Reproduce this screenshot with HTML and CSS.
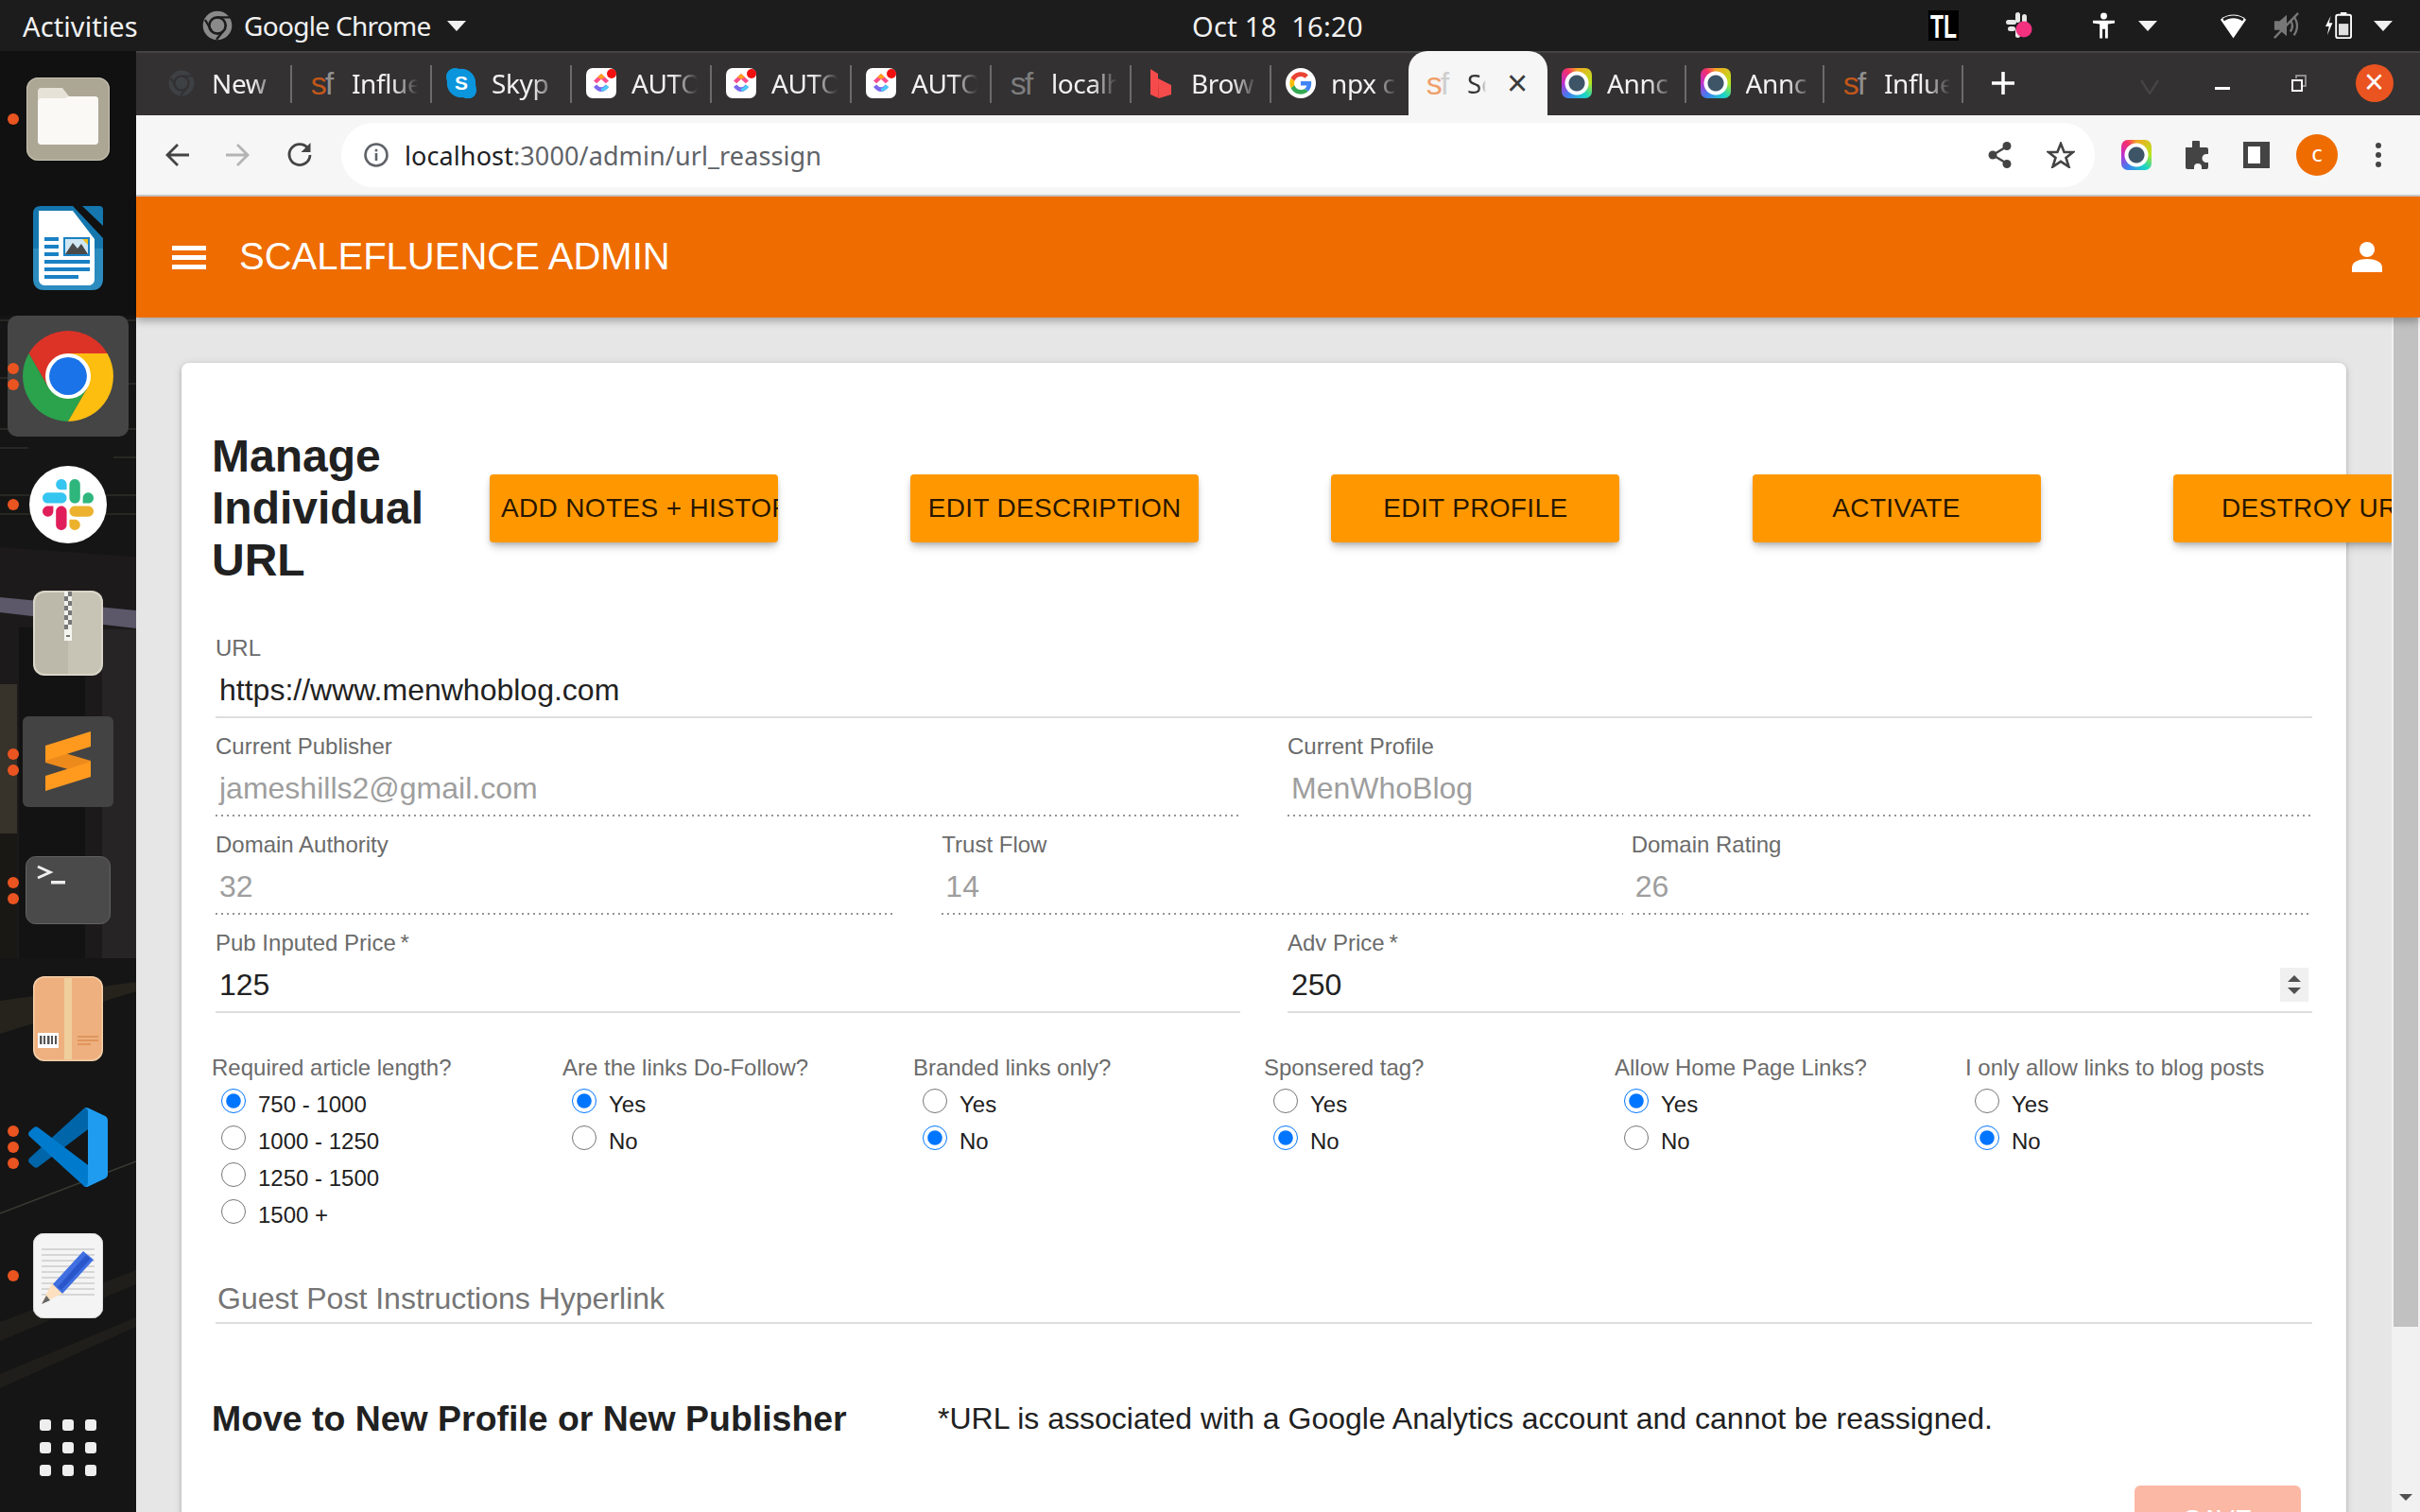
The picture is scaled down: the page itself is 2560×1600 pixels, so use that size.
FILE: index.html
```html
<!DOCTYPE html>
<html lang="en">
<head>
<meta charset="utf-8">
<title>Scalefluence Admin</title>
<link rel="stylesheet" href="styles.css">
</head>
<body>
<svg class="defs" width="0" height="0" aria-hidden="true">
  <defs>
    <symbol id="slack" viewBox="0 0 122.8 122.8">
      <path fill="#E01E5A" d="M25.8 77.6c0 7.1-5.8 12.9-12.9 12.9S0 84.7 0 77.6s5.8-12.9 12.9-12.9h12.9v12.9z"/>
      <path fill="#E01E5A" d="M32.3 77.6c0-7.1 5.8-12.9 12.9-12.9s12.9 5.8 12.9 12.9v32.3c0 7.1-5.8 12.9-12.9 12.9s-12.9-5.8-12.9-12.9V77.6z"/>
      <path fill="#36C5F0" d="M45.2 25.8c-7.1 0-12.9-5.8-12.9-12.9S38.1 0 45.2 0s12.9 5.8 12.9 12.9v12.9H45.2z"/>
      <path fill="#36C5F0" d="M45.2 32.3c7.1 0 12.9 5.8 12.9 12.9s-5.8 12.9-12.9 12.9H12.9C5.8 58.1 0 52.3 0 45.2s5.8-12.9 12.9-12.9h32.3z"/>
      <path fill="#2EB67D" d="M97 45.2c0-7.1 5.8-12.9 12.9-12.9s12.9 5.8 12.9 12.9-5.8 12.9-12.9 12.9H97V45.2z"/>
      <path fill="#2EB67D" d="M90.5 45.2c0 7.1-5.8 12.9-12.9 12.9s-12.9-5.8-12.9-12.9V12.9C64.7 5.8 70.5 0 77.6 0s12.9 5.8 12.9 12.9v32.3z"/>
      <path fill="#ECB22E" d="M77.6 97c7.1 0 12.9 5.8 12.9 12.9s-5.8 12.9-12.9 12.9-12.9-5.8-12.9-12.9V97h12.9z"/>
      <path fill="#ECB22E" d="M77.6 90.5c-7.1 0-12.9-5.8-12.9-12.9s5.8-12.9 12.9-12.9h32.3c7.1 0 12.9 5.8 12.9 12.9s-5.8 12.9-12.9 12.9H77.6z"/>
    </symbol>
    <symbol id="clickup" viewBox="0 0 32 32">
      <rect width="32" height="32" rx="7" fill="#fff"/>
      <path d="M16 6 L24 13.5 L20.8 16.2 L16 11.8 L11.2 16.2 L8 13.5Z" fill="#fa4d8c"/>
      <path d="M16 6 L20 9.8 L16 11.8 L12 9.8Z" fill="#ffa11a"/>
      <path d="M8 20 L11.2 17.4 Q16 23 20.8 17.4 L24 20 Q16 30 8 20Z" fill="#7b68ee"/>
      <path d="M20.8 17.4 L24 20 Q20.5 24.5 16 24.6 V21.4 Q18.8 21.3 20.8 17.4Z" fill="#49ccf9"/>
      <circle cx="27" cy="6" r="5" fill="#f10f0f"/>
    </symbol>
    <symbol id="chromelogo" viewBox="4 4 40 40">
      <path fill="#dd3327" d="M41.3 14A20 20 0 0 0 6.7 14L15.34 29 24 14Z"/>
      <path fill="#2ba24c" d="M6.7 14A20 20 0 0 0 24 44L32.66 29H15.34Z"/>
      <path fill="#fdbe10" d="M24 44A20 20 0 0 0 41.3 14H24L32.66 29Z"/>
      <circle cx="24" cy="24" r="10" fill="#fff"/>
      <circle cx="24" cy="24" r="8.300" fill="#1a73e8"/>
    </symbol>
    <symbol id="chromegrey" viewBox="0 0 48 48">
      <circle cx="24" cy="24" r="23" fill="currentColor"/>
      <circle cx="24" cy="24" r="13" fill="none" stroke="var(--chrome-cut)" stroke-width="4"/>
      <path d="M24 11H45M15 33 4.5 15M33 33 22.5 46" stroke="var(--chrome-cut)" stroke-width="3.5" fill="none"/>
    </symbol>
  </defs>
</svg>

<header class="topbar">
  <span class="tb-activities">Activities</span>
  <svg class="tb-chrome" viewBox="0 0 48 48"><use href="#chromegrey"/></svg>
  <span class="tb-app">Google Chrome</span>
  <span class="caret tb-caret"></span>
  <time class="tb-clock">Oct 18&nbsp; 16:20</time>
  <svg class="tb-tl" viewBox="0 0 32 32"><rect width="32" height="32" fill="#000"/><text x="2" y="29" textLength="28" lengthAdjust="spacingAndGlyphs" font-family="Liberation Sans" font-weight="700" font-size="35" fill="#fff">TL</text></svg>
  <svg class="tb-slack" viewBox="0 0 28 28">
    <g fill="#e8e8e8"><rect x="10" y="0" width="5" height="11" rx="2.5"/><rect x="0" y="8" width="11" height="5" rx="2.5"/><rect x="17" y="2" width="5" height="9" rx="2.5"/><rect x="2" y="15" width="8" height="5" rx="2.5"/><rect x="10" y="17" width="5" height="10" rx="2.5"/></g>
    <circle cx="19" cy="18" r="8.5" fill="#f2317f"/>
  </svg>
  <svg class="tb-access" viewBox="0 0 26 28"><circle cx="13" cy="3.6" r="3.6" fill="#fff"/><path d="M1 8.5H25V11.5L17.5 12.5V18H8.5V12.500L1 11.500ZM8.500 18H11.500V28H8.500ZM14.500 18H17.500V28H14.500Z" fill="#fff"/></svg>
  <span class="caret tb-caret2"></span>
  <svg class="tb-wifi" viewBox="0 0 32 28"><path d="M16 28 2 7.500C10 .5 22 .5 30 7.500Z" fill="#fff"/><path d="M4.500 6.500C11 2 21 2 27.500 6.500L26 9C20 5 12 5 6 9Z" fill="#1c1c1c"/></svg>
  <svg class="tb-vol" viewBox="0 0 30 30" fill="none"><path d="M1 10H7L15 3V27L7 20H1Z" fill="#777"/><path d="M19 9C22 13 22 18 19 22M23 5C28 11 28 20 23 26" stroke="#777" stroke-width="2.500"/><path d="M1 29 28 1" stroke="#777" stroke-width="2.500"/></svg>
  <svg class="tb-batt" viewBox="0 0 30 30"><path d="M6 4 0 16H4L2 26 8 12H4Z" fill="#fff"/><rect x="12" y="3" width="17" height="26" rx="2" fill="none" stroke="#fff" stroke-width="2"/><rect x="17" y="0" width="7" height="3" fill="#fff"/><rect x="15" y="13" width="11" height="13" fill="#e0e0e0"/></svg>
  <span class="caret tb-caret3"></span>
</header>

<div class="desktop">
  <nav class="dock">
    <svg class="wallpaper" viewBox="0 0 144 1546" preserveAspectRatio="none" aria-hidden="true">
      <rect width="144" height="1546" fill="#151515"/>
      <rect y="0" width="144" height="280" fill="#111"/>
      <g stroke="#30302b" stroke-width="2" opacity=".7">
        <path d="M0 285H144M0 346H50M100 352H144M0 400H144M0 420H30M120 430H144M0 470H144M0 490H144"/>
      </g>
      <path d="M0 525 144 535V960L0 960Z" fill="#1c1a1a"/>
      <path d="M0 578 144 592V611L0 594Z" fill="#5c586a"/>
      <rect x="108" y="612" width="36" height="348" fill="#262424"/>
      <rect x="20" y="610" width="70" height="350" fill="#131313"/>
      <path d="M0 670H18V828H0Z" fill="#37322a"/>
      <path d="M0 828H18V980H0Z" fill="#1a1815"/>
      <path d="M0 960H144V980L0 1000Z" fill="#151515"/>
      <path d="M0 1005 144 985V995L0 1040Z" fill="#25231c"/>
      <path d="M0 1230 144 1175" stroke="#3a3a34" stroke-width="1.500"/>
      <path d="M0 1345 144 1290V1305L0 1365ZM0 1400 144 1340V1350L0 1415Z" fill="#1f1e1a"/>
    </svg>
    <div class="dock-item">
      <span class="dots"><i></i></span>
      <svg class="ic-files" viewBox="0 0 88 88"><rect width="88" height="88" rx="12" fill="#aca695"/><rect x=".5" y=".5" width="87" height="87" rx="12" fill="none" stroke="#c9c4b5"/><path d="M12 15a4 4 0 0 1 4-4H38l7 9H72a4 4 0 0 1 4 4V67a4 4 0 0 1-4 4H16a4 4 0 0 1-4-4Z" fill="#e6e2d8"/><path d="M12 26a4 4 0 0 1 4-4H40l5-2H72a4 4 0 0 1 4 4V67a4 4 0 0 1-4 4H16a4 4 0 0 1-4-4Z" fill="#faf9f6"/></svg>
    </div>
    <div class="dock-item">
      <svg class="ic-writer" viewBox="0 0 74 89">
        <path d="M8 0H42L74 34V76Q74 89 62 89H12Q0 89 0 76V8Q0 0 8 0Z" fill="#1577ae"/>
        <path d="M52 0H70Q74 0 74 4V21Z" fill="#1577ae"/>
        <path d="M6 5H42L65 35V76Q65 84 58 84H13Q6 84 6 76Z" fill="#fff"/>
        <path d="M0 45H74V76Q74 89 62 89H12Q0 89 0 76Z" fill="#4aa7d8" opacity=".45"/>
        <path d="M6 45H65V76Q65 84 58 84H13Q6 84 6 76Z" fill="#fff"/>
        <g fill="#1a81c4"><rect x="12" y="33" width="15" height="4"/><rect x="12" y="41" width="15" height="4"/><rect x="12" y="49" width="15" height="4"/><rect x="12" y="57" width="48" height="4"/><rect x="12" y="65" width="48" height="4"/><rect x="12" y="73" width="36" height="4"/></g>
        <rect x="32" y="33" width="28" height="20" fill="#1a81c4"/><rect x="34" y="35" width="24" height="16" fill="#cfe6f3"/><path d="M34 51 42 39 47 45 51 40 58 51Z" fill="#4a4a4a"/><path d="M52 35H58V41Z" fill="#f3c019"/>
      </svg>
    </div>
    <div class="dock-item dock-active">
      <span class="dots"><i></i><i></i></span>
      <svg class="ic-chrome" viewBox="0 0 48 48"><use href="#chromelogo" width="48" height="48"/></svg>
    </div>
    <div class="dock-item">
      <span class="dots"><i></i></span>
      <span class="ic-slackwrap"><svg class="ic-slack" viewBox="0 0 122.800 122.800"><use href="#slack"/></svg></span>
    </div>
    <div class="dock-item">
      <svg class="ic-zip" viewBox="0 0 74 90"><rect width="74" height="90" rx="12" fill="#d9d5c8"/><path d="M37 2H60Q72 2 72 14V76Q72 88 60 88H37Z" fill="#c8c4b5"/><path d="M2 14Q2 2 14 2H37V88H14Q2 88 2 76Z" fill="#bdb9aa"/><g fill="#f1f1ec"><rect x="33" y="1" width="4" height="5"/><rect x="37" y="6" width="4" height="5"/><rect x="33" y="11" width="4" height="5"/><rect x="37" y="16" width="4" height="5"/><rect x="33" y="21" width="4" height="5"/><rect x="37" y="26" width="4" height="5"/><rect x="33" y="31" width="4" height="5"/><rect x="37" y="36" width="4" height="5"/></g><g fill="#777"><rect x="37" y="1" width="4" height="5"/><rect x="33" y="6" width="4" height="5"/><rect x="37" y="11" width="4" height="5"/><rect x="33" y="16" width="4" height="5"/><rect x="37" y="21" width="4" height="5"/><rect x="33" y="26" width="4" height="5"/><rect x="37" y="31" width="4" height="5"/><rect x="33" y="36" width="4" height="5"/></g><rect x="33" y="41" width="8" height="12" fill="#f5f5f0"/><rect x="35" y="47" width="4" height="2" fill="#777"/></svg>
    </div>
    <div class="dock-item">
      <span class="dots"><i></i><i></i></span>
      <svg class="ic-sublime" viewBox="0 0 96 96"><rect width="96" height="96" rx="6" fill="#434343"/><path d="M24 33 72 47V63L24 49Z" fill="#ec8a1c"/><path d="M72 16V32L24 47V31Z" fill="#ff9a1f"/><path d="M72 48V64L24 79V63Z" fill="#ff9a1f"/></svg>
    </div>
    <div class="dock-item">
      <span class="dots"><i></i><i></i></span>
      <svg class="ic-term" viewBox="0 0 90 72"><rect x=".5" y=".5" width="89" height="71" rx="10" fill="#4a4a4a" stroke="#636363"/><path d="M13 11 26 17 13 23" fill="none" stroke="#eee" stroke-width="3"/><rect x="27" y="26" width="15" height="3.500" fill="#eee"/></svg>
    </div>
    <div class="dock-item">
      <svg class="ic-pack" viewBox="0 0 74 90"><rect width="74" height="90" rx="12" fill="#f6cfa8"/><rect x="1.500" y="1.500" width="71" height="87" rx="11" fill="#eeb07f"/><rect x="33" y="2" width="8" height="86" fill="#efcf9c"/><rect x="5" y="60" width="22" height="16" fill="#fff"/><g fill="#555"><rect x="7" y="63" width="2.500" height="9"/><rect x="11" y="63" width="2" height="9"/><rect x="15" y="63" width="2.500" height="9"/><rect x="19" y="63" width="2" height="9"/><rect x="23" y="63" width="2" height="9"/></g><g fill="#e0955c"><rect x="47" y="63" width="22" height="2"/><rect x="47" y="67" width="22" height="2"/><rect x="47" y="71" width="14" height="2"/></g></svg>
    </div>
    <div class="dock-item">
      <span class="dots"><i></i><i></i><i></i></span>
      <svg class="ic-code" viewBox="0 0 100 100"><path fill="#0065a9" d="M96.500 10.800 75.900.9c-2.400-1.100-5.200-.7-7 1.200L1.400 63.600c-1.800 1.700-1.800 4.500 0 6.200l5.500 5c1.500 1.300 3.700 1.400 5.300.2L93.400 13.600c2.700-2 6.600-.1 6.600 3.300v-.2c0-2.400-1.400-4.600-3.500-5.900z"/><path fill="#007acc" d="M96.500 89.200 75.900 99.100c-2.400 1.100-5.200.7-7-1.200L1.400 36.400c-1.800-1.700-1.800-4.500 0-6.200l5.500-5c1.500-1.300 3.700-1.400 5.300-.2l81.200 61.400c2.700 2 6.600.1 6.600-3.300v.2c0 2.400-1.400 4.600-3.500 5.900z"/><path fill="#1f9cf0" d="M75.900 99.100c-2.400 1.200-5.300.7-7.200-1.200 2.300 2.300 6.300.7 6.300-2.600V4.700c0-3.300-4-5-6.300-2.600 1.900-1.900 4.800-2.400 7.200-1.200l20.600 9.900c2.200 1 3.500 3.200 3.500 5.600v67.200c0 2.400-1.400 4.600-3.500 5.600z"/></svg>
    </div>
    <div class="dock-item">
      <span class="dots"><i></i></span>
      <svg class="ic-gedit" viewBox="0 0 74 90"><rect width="74" height="90" rx="12" fill="#f4f4f4" stroke="#c8c8c8"/><g fill="#d6d6d6"><rect x="9" y="16" width="56" height="2"/><rect x="9" y="22" width="56" height="2"/><rect x="9" y="28" width="56" height="2"/><rect x="9" y="34" width="56" height="2"/><rect x="9" y="40" width="56" height="2"/><rect x="9" y="46" width="56" height="2"/><rect x="9" y="52" width="56" height="2"/><rect x="9" y="58" width="56" height="2"/><rect x="9" y="64" width="56" height="2"/></g><path d="M53 19 64 28 31 64 20 55Z" fill="#3f6fe0"/><path d="M56 23 61 27 30 60 26 57Z" fill="#2a56cc"/><path d="M20 53 31 64 9 74Z" fill="#fde0c0"/><path d="M14 66 18 71 9 75Z" fill="#666"/></svg>
    </div>
    <div class="dock-grid">
      <i></i><i></i><i></i><i></i><i></i><i></i><i></i><i></i><i></i>
    </div>
  </nav>

  <div class="browser">
    <div class="tabstrip">
      <div class="tab"><span class="fav"><svg class="fav-new" viewBox="0 0 48 48"><use href="#chromegrey"/></svg></span><span class="tab-title">New</span></div>
      <div class="tab"><span class="fav sf"><b class="sf-s">s</b><b class="sf-f">f</b></span><span class="tab-title">Influe</span></div>
      <div class="tab"><span class="fav"><svg viewBox="0 0 32 32"><path d="M9 0Q12 0 14 1A15 15 0 0 1 31 18Q32 20 32 23A9 9 0 0 1 18 31 15 15 0 0 1 1 14Q0 12 0 9A9 9 0 0 1 9 0Z" fill="#0a95dd"/><text x="16" y="23" text-anchor="middle" font-family="Liberation Sans" font-weight="700" font-size="21" fill="#fff">S</text></svg></span><span class="tab-title">Skyp</span></div>
      <div class="tab"><span class="fav"><svg viewBox="0 0 32 32"><use href="#clickup"/></svg></span><span class="tab-title">AUTO</span></div>
      <div class="tab"><span class="fav"><svg viewBox="0 0 32 32"><use href="#clickup"/></svg></span><span class="tab-title">AUTO</span></div>
      <div class="tab"><span class="fav"><svg viewBox="0 0 32 32"><use href="#clickup"/></svg></span><span class="tab-title">AUTO</span></div>
      <div class="tab"><span class="fav sf sf-dim"><b class="sf-s">s</b><b class="sf-f">f</b></span><span class="tab-title">localh</span></div>
      <div class="tab"><span class="fav"><svg viewBox="0 0 32 32"><path d="M5 1 13 6V11L27 18V28L14 32 5 28Z" fill="#f54b4b"/><path d="M13 11V32L14 32 13 11Z" fill="#c83a3a"/></svg></span><span class="tab-title">Brow</span></div>
      <div class="tab tab-before-active"><span class="fav"><svg viewBox="0 0 48 48"><circle cx="24" cy="24" r="24" fill="#fff"/><g transform="translate(6.500 6.500) scale(.73)"><path fill="#EA4335" d="M24 9.500c3.540 0 6.710 1.220 9.210 3.600l6.850-6.850C35.900 2.380 30.470 0 24 0 14.620 0 6.510 5.380 2.560 13.220l7.980 6.190C12.430 13.720 17.740 9.500 24 9.500z"/><path fill="#4285F4" d="M46.980 24.550c0-1.570-.15-3.090-.38-4.550H24v9.020h12.940c-.58 2.960-2.260 5.480-4.780 7.180l7.730 6c4.510-4.180 7.090-10.360 7.090-17.650z"/><path fill="#FBBC05" d="M10.530 28.590c-.48-1.450-.76-2.990-.76-4.590s.27-3.140.76-4.590l-7.980-6.190C.92 16.460 0 20.120 0 24c0 3.880.92 7.540 2.560 10.780l7.970-6.190z"/><path fill="#34A853" d="M24 48c6.480 0 11.930-2.130 15.890-5.810l-7.730-6c-2.150 1.450-4.920 2.300-8.160 2.300-6.260 0-11.570-4.220-13.470-9.910l-7.980 6.190C6.510 42.620 14.620 48 24 48z"/></g></svg></span><span class="tab-title">npx c</span></div>
      <div class="tab tab-active"><span class="fav sf sf-light"><b class="sf-s">s</b><b class="sf-f">f</b></span><span class="tab-title tab-title-short">Sc</span><span class="tab-close">×</span></div>
      <div class="tab tab-narrow"><span class="fav"><span class="ext"></span></span><span class="tab-title">Annc</span></div>
      <div class="tab tab-narrow"><span class="fav"><span class="ext"></span></span><span class="tab-title">Annc</span></div>
      <div class="tab tab-narrow"><span class="fav sf"><b class="sf-s">s</b><b class="sf-f">f</b></span><span class="tab-title">Influe</span></div>
      <svg class="new-tab" viewBox="0 0 24 24"><path d="M12 0V24M0 12H24" stroke="#fff" stroke-width="3.500"/></svg>
      <svg class="tab-chevron" viewBox="0 0 20 16"><path d="M1 1 10 15 19 1" fill="none" stroke="#454545" stroke-width="2.500"/></svg>
      <span class="win-min"></span>
      <svg class="win-restore" viewBox="0 0 16 18"><rect x="1" y="6" width="10" height="11" fill="none" stroke="#fff" stroke-width="2"/><path d="M5 4V1H15V12H12" fill="none" stroke="#aaa" stroke-width="1.500"/></svg>
      <span class="win-close">×</span>
    </div>

    <div class="toolbar">
      <svg class="tl-back" viewBox="0 0 26 26"><path d="M25 13H3M13 2 2 13 13 24" fill="none" stroke="#444" stroke-width="2.800"/></svg>
      <svg class="tl-fwd" viewBox="0 0 26 26"><path d="M1 13H23M13 2 24 13 13 24" fill="none" stroke="#b4b4b4" stroke-width="2.800"/></svg>
      <svg class="tl-reload" viewBox="0 0 28 28"><path d="M23.500 8A11 11 0 1 0 25 14" fill="none" stroke="#444" stroke-width="2.800"/><path d="M25.500 1V11H15.500Z" fill="#444"/></svg>
      <div class="omnibox">
        <svg class="om-info" viewBox="0 0 26 26"><circle cx="13" cy="13" r="11.500" fill="none" stroke="#5f6368" stroke-width="2.600"/><rect x="11.700" y="11" width="2.600" height="8" fill="#5f6368"/><rect x="11.700" y="6.800" width="2.600" height="2.600" fill="#5f6368"/></svg>
        <span class="om-url"><span class="om-host">localhost</span>:3000/admin/url_reassign</span>
        <svg class="om-share" viewBox="0 0 25 28"><path d="M20 5 5 14 20 23" fill="none" stroke="#444" stroke-width="2.400"/><circle cx="20" cy="4.500" r="4.500" fill="#444"/><circle cx="5" cy="14" r="4.500" fill="#444"/><circle cx="20" cy="23.500" r="4.500" fill="#444"/></svg>
        <svg class="om-star" viewBox="0 0 30 28"><path d="M15 2 18.600 11H28L20.500 17 23.500 26.500 15 20.800 6.500 26.500 9.500 17 2 11H11.400Z" fill="none" stroke="#444" stroke-width="2.600"/></svg>
      </div>
      <span class="ext ext-tool"></span>
      <svg class="tl-puzzle" viewBox="0 0 30 30"><path d="M11 2a4 4 0 0 1 8 0V7H26a2 2 0 0 1 2 2v5h-2a4.500 4.500 0 0 0 0 9h2v5a2 2 0 0 1-2 2H21v-2a4 4 0 0 0-8 0v2H6a2 2 0 0 1-2-2V7h7Z" fill="#444"/></svg>
      <span class="tl-panel"></span>
      <span class="tl-avatar">c</span>
      <span class="tl-menu"><i></i><i></i><i></i></span>
    </div>

    <header class="appbar">
      <span class="hamburger"><i></i><i></i><i></i></span>
      <h1 class="appbar-title">SCALEFLUENCE ADMIN</h1>
      <svg class="appbar-user" viewBox="0 0 32 32"><ellipse cx="16" cy="8" rx="8" ry="8" fill="#fff"/><path d="M0 32V27C0 21 8 18 16 18S32 21 32 27V32Z" fill="#fff"/></svg>
    </header>

    <div class="viewport">
      <main class="page">
        <section class="card">
          <div class="head-row">
            <h2 class="page-title">Manage Individual URL</h2>
            <button class="action" type="button">ADD NOTES + HISTORY</button>
            <button class="action" type="button">EDIT DESCRIPTION</button>
            <button class="action" type="button">EDIT PROFILE</button>
            <button class="action" type="button">ACTIVATE</button>
            <button class="action" type="button">DESTROY URL</button>
          </div>

          <div class="fields">
            <div class="row">
              <div class="field"><span class="flabel">URL</span><span class="fvalue">https://www.menwhoblog.com</span></div>
            </div>
            <div class="row row-2">
              <div class="field field-off"><span class="flabel">Current Publisher</span><span class="fvalue">jameshills2@gmail.com</span></div>
              <div class="field field-off"><span class="flabel">Current Profile</span><span class="fvalue">MenWhoBlog</span></div>
            </div>
            <div class="row row-3">
              <div class="field field-off"><span class="flabel">Domain Authority</span><span class="fvalue">32</span></div>
              <div class="field field-off"><span class="flabel">Trust Flow</span><span class="fvalue">14</span></div>
              <div class="field field-off"><span class="flabel">Domain Rating</span><span class="fvalue">26</span></div>
            </div>
            <div class="row row-2">
              <div class="field"><span class="flabel">Pub Inputed Price&thinsp;*</span><span class="fvalue">125</span></div>
              <div class="field field-spin"><span class="flabel">Adv Price&thinsp;*</span><span class="fvalue">250</span><span class="spinner"><i class="up"></i><i class="down"></i></span></div>
            </div>
          </div>

          <div class="radios">
            <fieldset class="rgroup">
              <legend class="rlabel">Required article length?</legend>
              <label class="ritem"><input type="radio" name="len" checked><span>750 - 1000</span></label>
              <label class="ritem"><input type="radio" name="len"><span>1000 - 1250</span></label>
              <label class="ritem"><input type="radio" name="len"><span>1250 - 1500</span></label>
              <label class="ritem"><input type="radio" name="len"><span>1500 +</span></label>
            </fieldset>
            <fieldset class="rgroup">
              <legend class="rlabel">Are the links Do-Follow?</legend>
              <label class="ritem"><input type="radio" name="follow" checked><span>Yes</span></label>
              <label class="ritem"><input type="radio" name="follow"><span>No</span></label>
            </fieldset>
            <fieldset class="rgroup">
              <legend class="rlabel">Branded links only?</legend>
              <label class="ritem"><input type="radio" name="brand"><span>Yes</span></label>
              <label class="ritem"><input type="radio" name="brand" checked><span>No</span></label>
            </fieldset>
            <fieldset class="rgroup">
              <legend class="rlabel">Sponsered tag?</legend>
              <label class="ritem"><input type="radio" name="spons"><span>Yes</span></label>
              <label class="ritem"><input type="radio" name="spons" checked><span>No</span></label>
            </fieldset>
            <fieldset class="rgroup">
              <legend class="rlabel">Allow Home Page Links?</legend>
              <label class="ritem"><input type="radio" name="home" checked><span>Yes</span></label>
              <label class="ritem"><input type="radio" name="home"><span>No</span></label>
            </fieldset>
            <fieldset class="rgroup">
              <legend class="rlabel">I only allow links to blog posts</legend>
              <label class="ritem"><input type="radio" name="blog"><span>Yes</span></label>
              <label class="ritem"><input type="radio" name="blog" checked><span>No</span></label>
            </fieldset>
          </div>

          <div class="fields">
            <div class="guest">Guest Post Instructions Hyperlink</div>
          </div>

          <div class="move-row">
            <h3 class="move-title">Move to New Profile or New Publisher</h3>
            <p class="move-note">*URL is associated with a Google Analytics account and cannot be reassigned.</p>
          </div>

          <div class="save-row">
            <button class="save" type="button">SAVE</button>
          </div>
        </section>
      </main>
      <div class="scrollbar">
        <span class="thumb"></span>
        <span class="sb-arrow"></span>
      </div>
    </div>
  </div>
</div>
</body>
</html>
```

FILE: styles.css
```css
* { box-sizing: border-box; }
html, body { margin: 0; padding: 0; }
body {
  width: 2560px;
  height: 1600px;
  overflow: hidden;
  display: flex;
  flex-direction: column;
  font-family: "Liberation Sans", Arial, sans-serif;
  background: #161616;
  --chrome-cut: #1c1c1c;
}
.defs { position: absolute; }

/* GNOME top bar */
.topbar {
  height: 54px;
  flex: none;
  display: flex;
  align-items: center;
  background: #1c1c1c;
  color: #f2f2f2;
  font-family: "Noto Sans", sans-serif;
  font-size: 28px;
}
.tb-activities { margin-left: 24px; width: 122px; font-size: 29px; letter-spacing: .1px; white-space: nowrap; }
.tb-chrome { width: 32px; height: 32px; margin-left: 68px; color: #8a8a8a; }
.tb-app { margin-left: 12px; letter-spacing: -.7px; width: 208px; white-space: nowrap; }
.caret { width: 0; height: 0; border-left: 10px solid transparent; border-right: 10px solid transparent; border-top: 11px solid #f2f2f2; flex: none; }
.tb-caret { margin-left: 7px; }
.tb-clock { margin-left: 768px; width: 186px; white-space: nowrap; letter-spacing: .3px; font-size: 29px; }
.tb-tl { width: 32px; height: 32px; margin-left: 593px; }
.tb-slack { width: 28px; height: 28px; margin-left: 50px; }
.tb-access { width: 25px; height: 28px; margin-left: 63px; }
.tb-caret2 { margin-left: 24px; }
.tb-wifi { width: 31px; height: 28px; margin-left: 65px; }
.tb-vol { width: 28px; height: 28px; margin-left: 27px; }
.tb-batt { width: 28px; height: 30px; margin-left: 27px; }
.tb-caret3 { margin-left: 23px; }

.desktop { flex: 1; display: flex; min-height: 0; }

/* Dock */
.dock {
  width: 144px;
  flex: none;
  position: relative;
  display: flex;
  flex-direction: column;
  padding-top: 4px;
  background: #161616;
}
.wallpaper { position: absolute; inset: 0; width: 100%; height: 100%; }
.dock-item {
  position: relative;
  height: 136px;
  flex: none;
  display: flex;
  align-items: center;
  justify-content: center;
}
.dock-item svg { display: block; }
.dock-active::before {
  content: "";
  position: absolute;
  left: 8px; right: 8px; top: 4px; bottom: 4px;
  border-radius: 10px;
  background: #454545;
}
.dock-active svg { position: relative; }
.dots {
  position: absolute;
  left: 8px; top: 0; bottom: 0;
  display: flex;
  flex-direction: column;
  justify-content: center;
  gap: 5px;
  z-index: 1;
}
.dots i { display: block; width: 12px; height: 12px; border-radius: 50%; background: #e95420; }
.ic-files { width: 88px; height: 88px; position: relative; }
.ic-writer { width: 74px; height: 89px; position: relative; }
.ic-chrome { width: 96px; height: 96px; }
.ic-slackwrap {
  position: relative;
  width: 82px; height: 82px;
  border-radius: 50%;
  background: #fff;
  display: flex; align-items: center; justify-content: center;
}
.ic-slack { width: 54px; height: 54px; }
.ic-zip, .ic-pack, .ic-gedit { width: 74px; height: 90px; position: relative; }
.ic-sublime { width: 96px; height: 96px; position: relative; }
.ic-term { width: 90px; height: 72px; position: relative; }
.ic-code { width: 84px; height: 84px; position: relative; }
.dock-grid {
  position: relative;
  margin: auto auto 38px;
  display: grid;
  grid-template-columns: repeat(3, 12px);
  grid-auto-rows: 12px;
  gap: 12px;
}
.dock-grid i { background: #eee; border-radius: 3px; }

/* Chrome */
.browser { flex: 1; min-width: 0; display: flex; flex-direction: column; position: relative; }
.tabstrip {
  height: 68px;
  flex: none;
  display: flex;
  align-items: stretch;
  padding-left: 17px;
  background: #333132;
  box-shadow: inset 0 2px 0 #444;
  font-family: "Noto Sans", sans-serif;
  font-size: 28px;
  color: #f2f2f2;
}
.tab { width: 148px; flex: none; display: flex; align-items: center; padding-left: 15px; position: relative; }
.tab::after { content: ""; position: absolute; right: 0; top: 15px; width: 2px; height: 40px; background: #6c6a6b; }
.tab-narrow { width: 146.5px; }
.tab-before-active { width: 145px; }
.tab-before-active::after, .tab-active::after { display: none; }
.fav { width: 32px; height: 32px; flex: none; display: flex; align-items: center; justify-content: center; }
.fav svg { width: 32px; height: 32px; display: block; }
.fav .fav-new { width: 28px; height: 28px; color: #3e4144; --chrome-cut: #333132; }
.tab-title {
  margin-left: 16px;
  width: 70px;
  white-space: nowrap;
  overflow: hidden;
  -webkit-mask-image: linear-gradient(90deg, #000 62%, transparent 100%);
  mask-image: linear-gradient(90deg, #000 62%, transparent 100%);
  letter-spacing: -.4px;
}
.sf { font-family: "Liberation Sans", sans-serif; font-size: 34px; line-height: 32px; letter-spacing: -2px; }
.sf b { font-weight: 400; }
.sf-s { color: #c2571a; }
.sf-f { color: #8f8f8f; }
.sf-dim .sf-s, .sf-dim .sf-f { color: #7d7d7d; }
.sf-light .sf-s { color: #ef9f6a; }
.sf-light .sf-f { color: #cfcfcf; }
.tab-active {
  background: #f6f6f6;
  color: #333;
  border-radius: 20px 20px 0 0;
  width: 147px;
  padding-left: 14px;
}
.tab-title-short { width: 20px; -webkit-mask-image: linear-gradient(90deg, #000 60%, transparent 100%); mask-image: linear-gradient(90deg, #000 60%, transparent 100%); }
.tab-close { margin-left: 22px; font-size: 38px; line-height: 1; color: #3b3b3b; font-family: "Liberation Sans", sans-serif; }
.new-tab { width: 24px; height: 24px; margin: 22px 0 0 30px; flex: none; }
.tab-chevron { width: 20px; height: 16px; margin: 30px 0 0 133px; flex: none; }
.win-min { width: 16px; height: 3px; background: #fff; margin: 38px 0 0 59px; flex: none; align-self: flex-start; }
.win-restore { width: 16px; height: 18px; margin: 25px 0 0 65px; flex: none; }
.win-close {
  width: 40px; height: 40px;
  margin: 14px 0 0 52px;
  flex: none;
  border-radius: 50%;
  background: #e95420;
  color: #fff;
  text-align: center;
  font-size: 36px;
  line-height: 38px;
  font-family: "Liberation Sans", sans-serif;
}

.toolbar {
  height: 86px;
  flex: none;
  display: flex;
  align-items: center;
  background: #f6f6f6;
  border-bottom: 2px solid #cccccc;
}
.tl-back { width: 26px; height: 26px; margin-left: 31px; }
.tl-fwd { width: 26px; height: 26px; margin-left: 37px; }
.tl-reload { width: 28px; height: 28px; margin-left: 39px; }
.omnibox {
  width: 1855px;
  height: 68px;
  margin-left: 30px;
  border-radius: 34px;
  background: #fff;
  display: flex;
  align-items: center;
  padding-left: 24px;
  flex: none;
}
.om-info { width: 26px; height: 26px; flex: none; }
.om-url { margin-left: 17px; font-family: "Noto Sans", sans-serif; font-size: 27px; letter-spacing: .1px; color: #5f6368; white-space: nowrap; }
.om-host { color: #202124; }
.om-share { width: 25px; height: 28px; margin-left: 1234px; flex: none; }
.om-star { width: 30px; height: 28px; margin-left: 37px; flex: none; }
.ext {
  display: block;
  width: 32px; height: 32px;
  border-radius: 7px;
  background:
    radial-gradient(circle, #3e5568 0 8px, #fff 9px 12px, transparent 13px),
    conic-gradient(from 0deg, #f5a623, #b5e61d 25%, #19d6c6 40%, #3f7ff0 60%, #c02fd0 75%, #f52f6a 90%, #f5a623);
  flex: none;
}
.ext-tool { margin-left: 28px; }
.tl-puzzle { width: 30px; height: 30px; margin-left: 32px; flex: none; }
.tl-panel { width: 28px; height: 28px; margin-left: 35px; flex: none; border: 5px solid #444; border-right-width: 10px; background: #fff; }
.tl-avatar {
  width: 44px; height: 44px;
  margin-left: 28px;
  flex: none;
  border-radius: 50%;
  background: #ef6c00;
  color: #fff;
  text-align: center;
  font-family: "Noto Sans", sans-serif;
  font-size: 24px;
  line-height: 40px;
}
.tl-menu { margin-left: 40px; display: flex; flex-direction: column; gap: 4px; flex: none; }
.tl-menu i { display: block; width: 6px; height: 6px; border-radius: 50%; background: #444; }

/* App bar */
.appbar {
  height: 128px;
  flex: none;
  display: flex;
  align-items: center;
  padding: 0 40px 0 38px;
  background: #ef6c00;
  color: #fff;
  position: relative;
  z-index: 2;
  box-shadow: 0 4px 8px rgba(0,0,0,.28);
}
.hamburger { width: 36px; display: flex; flex-direction: column; gap: 5px; flex: none; }
.hamburger i { display: block; height: 5px; background: #fff; }
.appbar-title { margin: 0 0 2px 35px; font-size: 40px; font-weight: 400; line-height: 1; flex: 1; }
.appbar-user { width: 32px; height: 32px; flex: none; }

/* Viewport */
.viewport { flex: 1; min-height: 0; display: flex; }
.page { flex: 1; min-width: 0; overflow: hidden; background: #e6e6e6; padding: 48px 48px 0; }
.scrollbar { width: 30px; flex: none; background: #f1f1f1; display: flex; flex-direction: column; align-items: center; }
.thumb { width: 26px; height: 1068px; background: #c1c1c1; }
.sb-arrow { margin-top: auto; margin-bottom: 12px; width: 0; height: 0; border-left: 7px solid transparent; border-right: 7px solid transparent; border-top: 7px solid #505050; }

.card {
  width: 2290px;
  background: #fff;
  border-radius: 8px;
  box-shadow: 0 2px 4px rgba(0,0,0,.2), 0 1px 10px rgba(0,0,0,.1);
  padding: 71px 0 0 32px;
  color: #202020;
}
.head-row { display: flex; align-items: center; }
.page-title { width: 264px; flex: none; margin: 0 30px 0 0; font-size: 48px; line-height: 55px; font-weight: 700; color: #212121; }
.action {
  width: 305px;
  height: 72px;
  flex: none;
  margin-right: 140.200px;
  padding: 0 12px;
  border: 0;
  border-radius: 4px;
  background: #ff9800;
  color: rgba(0,0,0,.87);
  font-family: "Liberation Sans", sans-serif;
  font-size: 28px;
  letter-spacing: .35px;
  white-space: nowrap;
  overflow: hidden;
  display: flex;
  align-items: center;
  justify-content: safe center;
  box-shadow: 0 6px 10px -2px rgba(0,0,0,.25), 0 2px 4px rgba(0,0,0,.12);
}

.fields { margin: 36px 0 0 4px; padding-right: 36px; }
.row { display: flex; }
.row-2 { gap: 50px; }
.row-2 > .field { width: 1084px; flex: none; }
.row-3 > .field:nth-child(1) { width: 723px; margin-right: 48px; }
.row-3 > .field:nth-child(2) { width: 716px; margin-right: 9px; }
.row-3 > .field:nth-child(3) { width: 722px; }
.field {
  height: 104px;
  flex: 1;
  display: flex;
  flex-direction: column;
  padding-top: 16px;
  border-bottom: 2px solid #dedede;
  position: relative;
}
.flabel { display: block; height: 28px; line-height: 28px; font-size: 24px; color: #6b6b6b; }
.fvalue { display: block; height: 58px; line-height: 60px; font-size: 32px; color: #212121; padding-left: 4px; }
.field-off {
  border-bottom: 0;
  background: linear-gradient(90deg, rgba(0,0,0,.42) 33%, transparent 0) left bottom / 6px 2px repeat-x;
}
.field-off .fvalue { color: #9e9e9e; }
.spinner {
  position: absolute;
  right: 4px;
  bottom: 10px;
  width: 30px;
  height: 36px;
  background: #f0f0f0;
  display: flex;
  flex-direction: column;
  align-items: center;
  justify-content: center;
  gap: 6px;
}
.spinner i { width: 0; height: 0; border-left: 7px solid transparent; border-right: 7px solid transparent; }
.spinner .up { border-bottom: 7px solid #505050; }
.spinner .down { border-top: 7px solid #505050; }

.radios { display: flex; margin-top: 44px; }
.rgroup { width: 371px; flex: none; border: 0; margin: 0; padding: 0; min-width: 0; }
.rlabel { display: block; padding: 0; height: 33px; line-height: 28px; font-size: 24px; color: #6b6b6b; white-space: nowrap; }
.ritem { height: 39px; display: flex; align-items: center; font-size: 24px; color: #212121; padding-left: 10px; }
.ritem input { width: 26px; height: 26px; margin: 0 13px 8px 0; flex: none; }

.guest {
  height: 60px;
  padding: 2px 0 0 2px;
  border-bottom: 2px solid #dedede;
  font-size: 32px;
  line-height: 62px;
  color: #757575;
}
.move-row { display: flex; align-items: center; margin-top: 77px; height: 46px; }
.move-title { width: 768px; flex: none; margin: 0; font-size: 37.440px; font-weight: 700; color: #212121; }
.move-note { margin: 0; font-size: 32px; color: #212121; }
.save-row { display: flex; justify-content: flex-end; padding-right: 48px; margin-top: 48px; }
.save {
  width: 176px;
  height: 72px;
  border: 0;
  border-radius: 6px;
  background: #fbb8a5;
  color: #fff;
  font-family: "Liberation Sans", sans-serif;
  font-size: 28px;
}
```
